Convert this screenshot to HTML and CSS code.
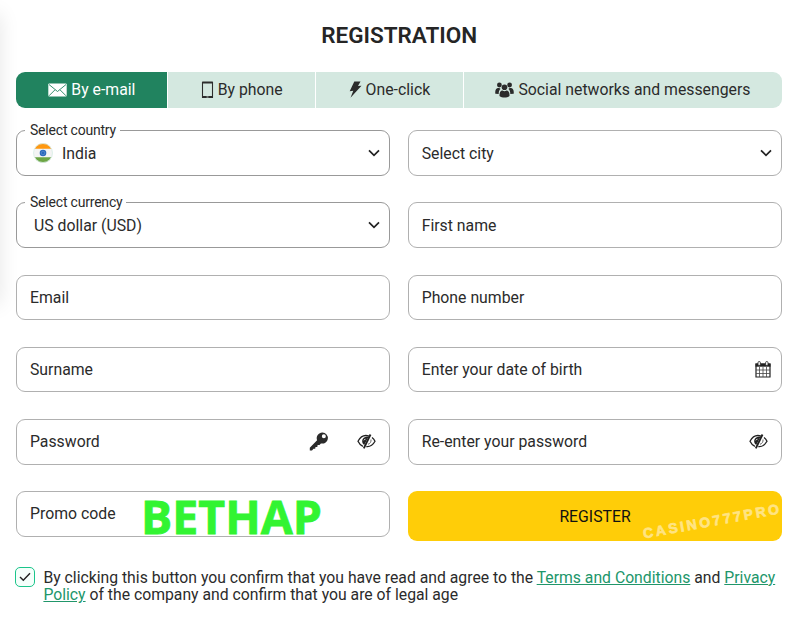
FILE: index.html
```html
<!DOCTYPE html>
<html lang="en">
<head>
    <meta charset="UTF-8">
    <meta name="viewport" content="width=device-width, initial-scale=1.0">
    <title>Registration</title>
    <link rel="stylesheet" href="styles.css">
</head>
<body>

    <div class="side-shadow"></div>

    <main class="registration">
        <h1>REGISTRATION</h1>

        <!-- Tabs -->
        <nav class="tabs">
            <a class="tab tab-email active">
                <svg width="19" height="14" viewBox="0 0 19 14"><rect x=".3" y=".5" width="18.4" height="13" rx="1" fill="#fff"/><path d="M1 1.5l8.5 7 8.5-7M1 12.8l6-6M18 12.8l-6-6" fill="none" stroke="#21835f" stroke-width=".9"/></svg>
                <span>By e-mail</span>
            </a>
            <a class="tab tab-phone">
                <svg width="13" height="18" viewBox="0 0 13 18"><path d="M1.5 1v16M11.5 1v16" stroke="#2d2d2d" stroke-width="1.1"/><path d="M1.2 1.5h10.6M1.2 16h10.6" stroke="#2d2d2d" stroke-width="2"/><path d="M5.5 16h2" stroke="#d4e8e0" stroke-width=".8"/></svg>
                <span>By phone</span>
            </a>
            <a class="tab tab-click">
                <svg width="13" height="17" viewBox="0 0 13 17"><path d="M5.3.5h6.2L9 5l3.5-.3L1.5 16.7l2.8-6.9-3.6.5z" fill="#2b2b2b"/></svg>
                <span>One-click</span>
            </a>
            <a class="tab tab-social">
                <svg width="19" height="16" viewBox="0 0 19 16" fill="#2b2b2b"><circle cx="4.4" cy="3" r="2.4"/><circle cx="14.6" cy="3" r="2.4"/><path d="M.3 11.7c-.4-3.6.7-5.8 3-5.8 1.1 0 1.8.4 2.2 1-1.2 1-1.8 2.5-1.8 5zM18.7 11.7c.4-3.6-.7-5.8-3-5.8-1.1 0-1.8.4-2.2 1 1.2 1 1.8 2.5 1.8 5z"/><circle cx="9.5" cy="5.2" r="2.8"/><path d="M4.500 14c-.2-3.600 1-5.400 3-5.500 1.200 1 2.800 1 4 0 2 .1 3.200 1.900 3 5.500-2.500 2.100-7.500 2.100-10 0z"/></svg>
                <span>Social networks and messengers</span>
            </a>
        </nav>

        <!-- Registration form -->
        <form class="fields">
            <div class="field select filled">
                <label class="caption">Select country</label>
                <svg class="flag" width="20" height="20" viewBox="0 0 20 20"><circle cx="10" cy="10" r="9.6" fill="#f4f4f4"/><path d="M1.5 5.7a9.5 9.5 0 0 1 17 0z" fill="#ff9811"/><path d="M1.5 14.3a9.5 9.5 0 0 0 17 0z" fill="#6da544"/><circle cx="10" cy="10" r="3.3" fill="#2a68bd"/><circle cx="10" cy="10" r="1.8" fill="none" stroke="#6e9ad0" stroke-width=".5"/><circle cx="10" cy="10" r="9.5" fill="none" stroke="#d5ece5" stroke-width=".8"/></svg>
                <span class="text">India</span>
                <svg class="arrow" width="12" height="8" viewBox="0 0 12 8"><path d="M1 1.3l5 5 5-5"/></svg>
            </div>
            <div class="field select">
                <span class="text">Select city</span>
                <svg class="arrow" width="12" height="8" viewBox="0 0 12 8"><path d="M1 1.3l5 5 5-5"/></svg>
            </div>

            <div class="field select filled">
                <label class="caption">Select currency</label>
                <span class="text">US dollar (USD)</span>
                <svg class="arrow" width="12" height="8" viewBox="0 0 12 8"><path d="M1 1.3l5 5 5-5"/></svg>
            </div>
            <div class="field"><span class="text">First name</span></div>

            <div class="field"><span class="text">Email</span></div>
            <div class="field"><span class="text">Phone number</span></div>

            <div class="field"><span class="text">Surname</span></div>
            <div class="field date">
                <span class="text">Enter your date of birth</span>
                <svg width="16" height="17" viewBox="0 0 16 17"><path d="M1 3h14v13H1z" fill="#fff" stroke="#222" stroke-width="1.2"/><path d="M.5 2.5h15v3.2H.5z" fill="#222"/><path d="M1 9h14M1 12.5h14M4.5 6v10M8 6v10M11.5 6v10" stroke="#444" stroke-width=".8"/><rect x="3" y=".5" width="2.4" height="4" rx="1.2" fill="#fff" stroke="#222" stroke-width=".8"/><rect x="10.6" y=".5" width="2.4" height="4" rx="1.2" fill="#fff" stroke="#222" stroke-width=".8"/></svg>
            </div>

            <div class="field password">
                <span class="text">Password</span>
                <svg class="key" width="20" height="19" viewBox="0 0 20 19"><path fill-rule="evenodd" d="M13.5.6a5.5 5.5 0 1 1-1.6 10.8L10.5 13H8.6l-.3 1.9H6.5l-.3 1.8H4.500L3 18.400H.8v-2.700l7.300-7.500A5.500 5.500 0 0 1 13.500.6zm1.300 1.700a2 2 0 1 0 .1 4 2 2 0 0 0-.1-4z" fill="#2b2b2b"/></svg>
                <svg class="eye" width="19" height="15" viewBox="0 0 19 15"><path d="M12 2.1C6.5.2 3 3.5 1 7.3c1 2.2 2.700 4 4.900 5M15 3.500c1.300 1 2.300 2.300 3 3.800-2.200 4-5.200 5.700-8.700 5.300" fill="none" stroke="#222" stroke-width="1.3"/><path d="M14 5.500c.3 2.400-1 4.200-3 4.800" fill="none" stroke="#555" stroke-width=".9"/><path d="M11.500 2.800C7.500 2 5 4.500 5.200 7.500c0 1.500.8 2.700 2 3.500z" fill="#222"/><path d="M7 6.300l1.500-1.500" stroke="#fff"/><path d="M13.500.5L6.800 14.300" stroke="#222" stroke-width="1.900"/></svg>
            </div>
            <div class="field password">
                <span class="text">Re-enter your password</span>
                <svg class="eye" width="19" height="15" viewBox="0 0 19 15"><path d="M12 2.1C6.5.2 3 3.5 1 7.3c1 2.2 2.700 4 4.900 5M15 3.500c1.300 1 2.300 2.300 3 3.800-2.200 4-5.200 5.700-8.700 5.300" fill="none" stroke="#222" stroke-width="1.3"/><path d="M14 5.500c.3 2.400-1 4.200-3 4.800" fill="none" stroke="#555" stroke-width=".9"/><path d="M11.500 2.800C7.500 2 5 4.500 5.200 7.500c0 1.500.8 2.700 2 3.500z" fill="#222"/><path d="M7 6.300l1.500-1.500" stroke="#fff"/><path d="M13.500.5L6.800 14.300" stroke="#222" stroke-width="1.900"/></svg>
            </div>

            <div class="field promo">
                <span class="text">Promo code</span>
                <svg class="code" width="182" height="44" viewBox="0 0 182 44"><text x="0" y="38" textLength="181" lengthAdjust="spacingAndGlyphs">BETHAP</text></svg>
            </div>
            <button type="button" class="register">
                REGISTER
                <svg class="watermark" width="144" height="44" viewBox="0 0 144 44"><text x="8" y="42.5" textLength="138" transform="rotate(-10.4 8 42.5)">CASINO777PRO</text></svg>
            </button>
        </form>

        <!-- Agreement -->
        <div class="agreement">
            <span class="checkbox"><svg width="12" height="10" viewBox="0 0 12 10"><path d="M1 5l3.3 3.3L11 1.2" fill="none" stroke="#222" stroke-width="1.4"/></svg></span>
            <p>By clicking this button you confirm that you have read and agree to the <a href="#">Terms and Conditions</a> and <a href="#">Privacy Policy</a> of the company and confirm that you are of legal age</p>
        </div>
    </main>

</body>
</html>
```
FILE: styles.css
```css
* {
    box-sizing: border-box;
}
body {
    font-family: Roboto, Arial, sans-serif;
    font-size: 15.8px;
    margin: 0;
    color: #2b2b2b;
    background: #fff;
    overflow: hidden;
}
.side-shadow {
    position: absolute;
    left: -20px;
    top: 14px;
    width: 20px;
    height: 290px;
    box-shadow: 0 0 20px rgba(0, 0, 0, 0.1);
}
.registration {
    padding: 21.4px 18px 0 16.4px;
}
h1 {
    margin: 0;
    font-size: 22.5px;
    line-height: 28px;
    font-weight: 600;
    text-align: center;
    color: #252525;
}
.tabs {
    display: flex;
    gap: 1px;
    height: 35.5px;
    margin-top: 22.8px;
    border-radius: 9px;
    overflow: hidden;
}
.tab {
    display: flex;
    align-items: center;
    justify-content: center;
    gap: 4px;
    background: #d4e8e0;
}
.tab-email {
    width: 151px;
}
.tab-phone {
    width: 146.5px;
}
.tab-click {
    width: 147px;
}
.tab-social {
    flex: 1;
}
.tab.active {
    background: #21835f;
    color: #fff;
}
.fields {
    display: grid;
    grid-template-columns: 1fr 1fr;
    grid-auto-rows: 45.5px;
    gap: 26.7px 17.8px;
    margin-top: 22.6px;
}
.field {
    position: relative;
    display: flex;
    align-items: center;
    border: 1px solid #b0b0b0;
    border-radius: 9px;
    padding: 0 10px 0 12.6px;
}
.field .text {
    flex: 1;
}
.filled {
    border-color: #999;
    padding-left: 16.6px;
}
.caption {
    position: absolute;
    left: 7.6px;
    top: -10.4px;
    padding: 0 4px 0 5px;
    font-size: 14px;
    letter-spacing: -0.2px;
    line-height: 18px;
    background: #fff;
}
.flag {
    margin: 0 9px 0 -1px;
}
.arrow {
    margin-right: -1px;
    fill: none;
    stroke: #222;
    stroke-width: 1.7;
}
.password {
    padding-right: 13.5px;
}
.key {
    margin-right: 28px;
}
.code {
    position: absolute;
    left: 123.6px;
    top: 3.5px;
    overflow: visible;
}
.code text {
    font: bold 47px "Open Sans", sans-serif;
    fill: #32f432;
    stroke: #32f432;
    stroke-width: 0.8;
}
.register {
    position: relative;
    height: 50px;
    border: none;
    border-radius: 9px;
    background: #ffcd08;
    color: #111;
    font-family: inherit;
    font-size: 15.8px;
}
.watermark {
    position: absolute;
    right: 2px;
    top: 5px;
    overflow: visible;
}
.watermark text {
    font: bold 14px "Liberation Sans", sans-serif;
    fill: #ffe484;
    stroke: #ffe484;
    stroke-width: 0.7;
}
.agreement {
    display: flex;
    gap: 8px;
    margin-top: 30.2px;
}
.checkbox {
    display: flex;
    align-items: center;
    justify-content: center;
    flex-shrink: 0;
    width: 20px;
    height: 20px;
    margin-left: -1px;
    border: 1px solid #1bc58b;
    border-radius: 5px;
    background: #f5fffb;
}
.agreement p {
    margin: 2px -10px 0 0;
    font-size: 15.75px;
    line-height: 17.4px;
}
.agreement a {
    color: #21966a;
}
```
